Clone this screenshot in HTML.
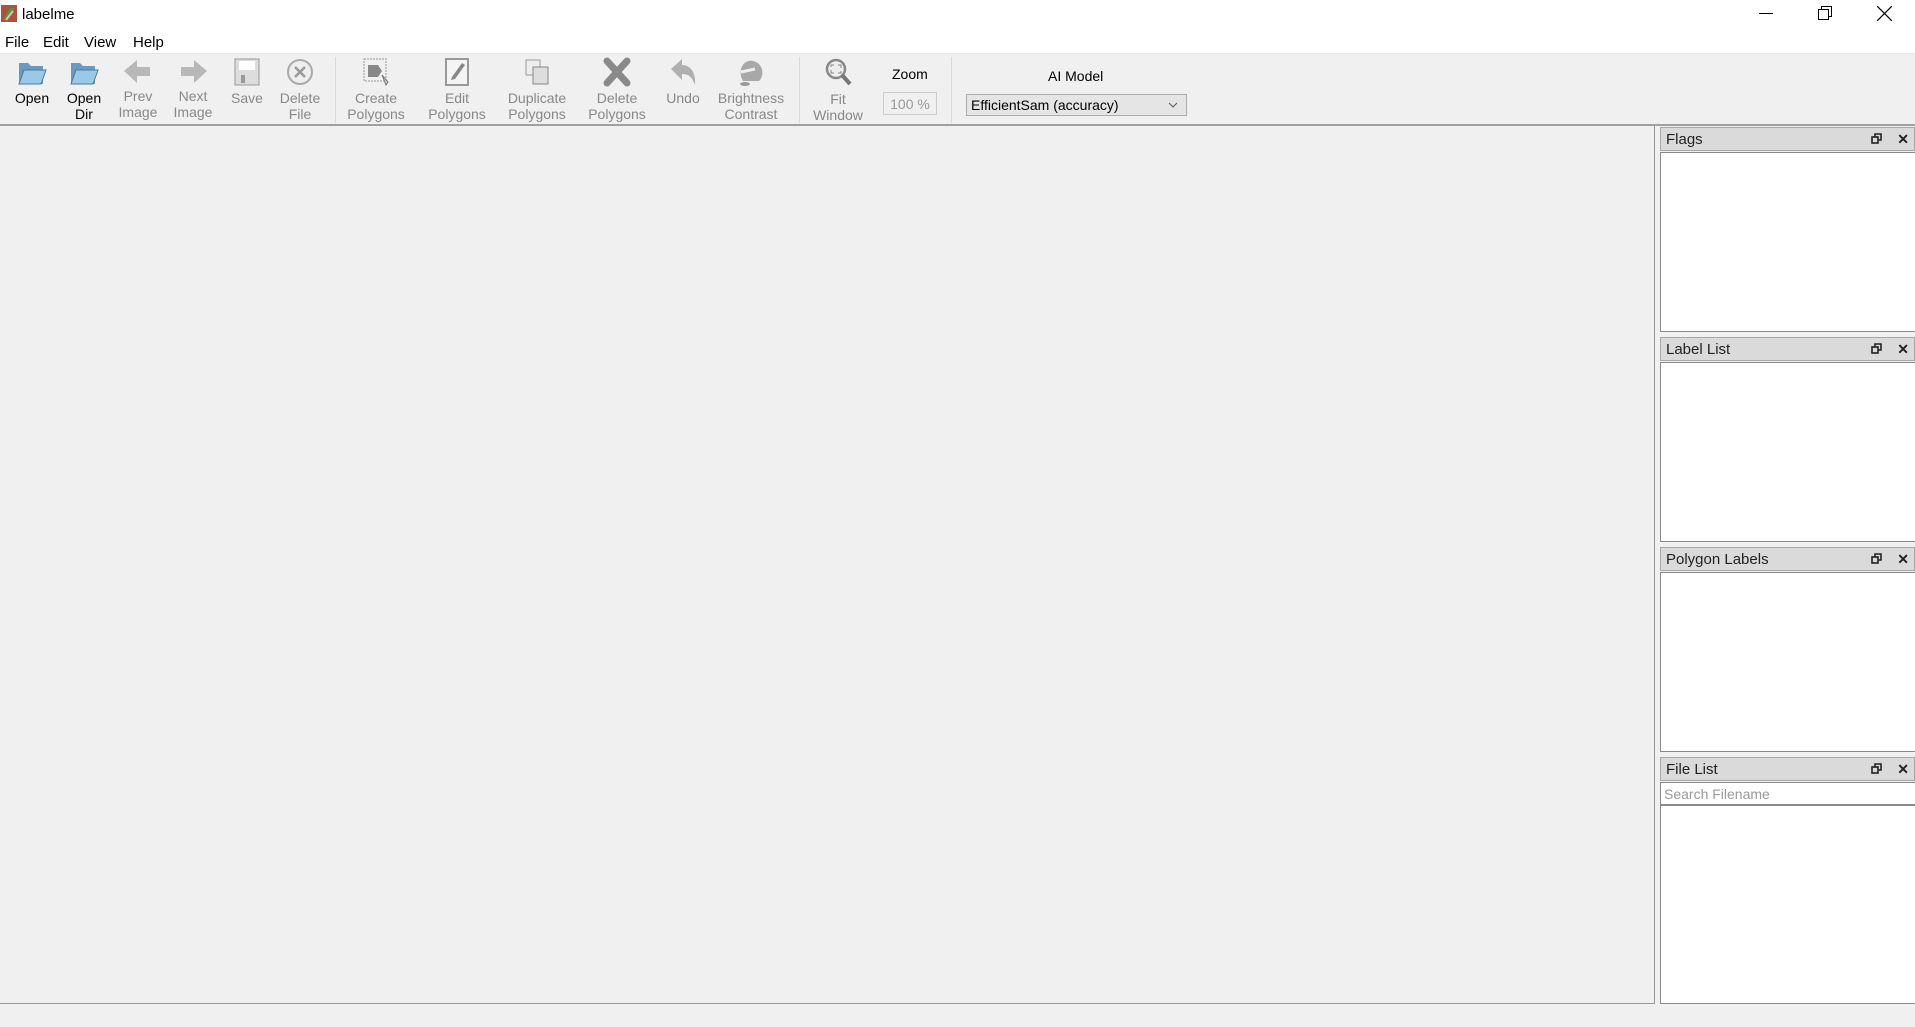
<!DOCTYPE html>
<html><head><meta charset="utf-8"><style>
*{margin:0;padding:0;box-sizing:border-box}
body{width:1915px;height:1027px;background:#f0f0f0;font-family:"Liberation Sans","Noto Sans CJK KR",sans-serif;position:relative;overflow:hidden;color:#000}
.abs{position:absolute}
.tb{position:absolute;top:0;width:80px;text-align:center;font-size:14px;color:#888;line-height:17px}
.tb.en{color:#000}
.tb svg{position:absolute;top:57px;left:24px}
.tb .l{position:absolute;left:0;width:100%}
.sep{position:absolute;top:57px;width:1px;height:66px;background:#d8d8d8}
.dt{position:absolute;left:1660px;width:255px;height:24px;background:#dadada;border:1px solid #a8a8a8;font-size:15px;padding:3px 0 0 5px;color:#222}
.dt .b{position:absolute;right:5px;top:3px;font-size:14px;font-weight:bold}
.dt .f{position:absolute;right:32px;top:5px;width:11px;height:11px}
.box{position:absolute;left:1660px;width:255px;background:#fff;border:1px solid #888;border-right:none}
</style></head><body>
<div class="abs" style="left:0;top:0;width:1915px;height:53px;background:#fff"></div>
<svg class="abs" style="left:1px;top:5px" width="16" height="17"><rect width="16" height="17" fill="#b05040"/><path d="M2 16 L8 4 L14 2 L10 10 Z" fill="#4a9a3a"/><path d="M5 15 L12 6" stroke="#e0c0a0" stroke-width="2"/></svg>
<div class="abs" style="left:22px;top:6px;font-size:15px">labelme</div>
<div class="abs" style="left:1759px;top:13px;width:14px;height:1px;background:#000"></div>
<svg class="abs" style="left:1818px;top:6px" width="14" height="14"><rect x="0.5" y="3.5" width="10" height="10" fill="none" stroke="#000"/><path d="M3.5 3.5V0.5H13.5V10.5H10.5" fill="none" stroke="#000"/></svg>
<svg class="abs" style="left:1877px;top:6px" width="15" height="15"><path d="M0 0L15 15M15 0L0 15" stroke="#000" stroke-width="1.2"/></svg>
<div class="abs" style="top:34px;left:5px;font-size:15px">File</div>
<div class="abs" style="top:34px;left:43px;font-size:15px">Edit</div>
<div class="abs" style="top:34px;left:84px;font-size:15px">View</div>
<div class="abs" style="top:34px;left:133px;font-size:15px">Help</div>
<div class="abs" style="left:0;top:53px;width:1915px;height:1px;background:#e4e4e4"></div>

<div class="tb en" style="left:-8px"><svg width="32" height="30"><path d="M3 6h9l3 3h12v18H3z" fill="#6a9ac0"/><path d="M3 27l5-14h22l-5 14z" fill="#9cc8e8" stroke="#4a7aa0"/></svg><div class="l" style="top:90px">Open</div></div>
<div class="tb en" style="left:44px"><svg width="32" height="30"><path d="M3 6h9l3 3h12v18H3z" fill="#6a9ac0"/><path d="M3 27l5-14h22l-5 14z" fill="#9cc8e8" stroke="#4a7aa0"/></svg><div class="l" style="top:90px">Open</div><div class="l" style="top:106px">Dir</div></div>
<div class="tb" style="left:98px"><svg width="32" height="30"><path d="M2 14L15 3v7h13v9H15v7z" fill="#b8b8b8"/></svg><div class="l" style="top:88px">Prev</div><div class="l" style="top:104px">Image</div></div>
<div class="tb" style="left:153px"><svg width="32" height="30"><path d="M30 14L17 3v7H4v9h13v7z" fill="#b8b8b8"/></svg><div class="l" style="top:88px">Next</div><div class="l" style="top:104px">Image</div></div>
<div class="tb" style="left:207px"><svg width="32" height="30"><rect x="4" y="2" width="24" height="26" fill="#ddd" stroke="#999"/><rect x="8" y="4" width="16" height="9" fill="#fff"/><rect x="10" y="18" width="4" height="8" fill="#999"/></svg><div class="l" style="top:90px">Save</div></div>
<div class="tb" style="left:260px"><svg width="32" height="30"><circle cx="16" cy="15" r="12" fill="#eee" stroke="#aaa" stroke-width="2"/><path d="M11 10l10 10M21 10l-10 10" stroke="#999" stroke-width="2.5"/></svg><div class="l" style="top:90px">Delete</div><div class="l" style="top:106px">File</div></div>
<div class="sep" style="left:335px"></div>
<div class="tb" style="left:336px"><svg width="32" height="30"><rect x="4" y="2" width="22" height="22" fill="none" stroke="#999" stroke-dasharray="2 1"/><path d="M8 8h10l4 6-4 6H8z" fill="#888"/><path d="M22 18l4 10 2-3z" fill="#ccc" stroke="#777"/></svg><div class="l" style="top:90px">Create</div><div class="l" style="top:106px">Polygons</div></div>
<div class="tb" style="left:417px"><svg width="32" height="30"><rect x="5" y="2" width="22" height="26" fill="#f4f4f4" stroke="#999" stroke-width="2"/><path d="M11 20l10-14 3 2-10 14-4 1z" fill="#888"/></svg><div class="l" style="top:90px">Edit</div><div class="l" style="top:106px">Polygons</div></div>
<div class="tb" style="left:497px"><svg width="32" height="30"><rect x="5" y="3" width="14" height="15" fill="#eee" stroke="#999"/><rect x="12" y="10" width="15" height="17" fill="#ddd" stroke="#888"/></svg><div class="l" style="top:90px">Duplicate</div><div class="l" style="top:106px">Polygons</div></div>
<div class="tb" style="left:577px"><svg width="32" height="30"><path d="M6 4l20 22M26 4L6 26" stroke="#8a8a8a" stroke-width="7" stroke-linecap="round"/></svg><div class="l" style="top:90px">Delete</div><div class="l" style="top:106px">Polygons</div></div>
<div class="tb" style="left:643px"><svg width="32" height="30"><path d="M4 12L15 2v6c9 0 14 8 13 20-3-8-6-11-13-11v6z" fill="#b0b0b0"/></svg><div class="l" style="top:90px">Undo</div></div>
<div class="tb" style="left:711px"><svg width="32" height="30"><path d="M8 24c-6-10 0-22 10-20s12 14 6 20z" fill="#a8a8a8"/><path d="M6 15l14-3" stroke="#eee" stroke-width="3"/><ellipse cx="10" cy="27" rx="5" ry="2" fill="#999"/></svg><div class="l" style="top:90px">Brightness</div><div class="l" style="top:106px">Contrast</div></div>
<div class="sep" style="left:799px"></div>
<div class="tb" style="left:798px"><svg width="32" height="30"><circle cx="14" cy="12" r="9" fill="#eee" stroke="#888" stroke-width="2.5"/><path d="M20 18l8 9" stroke="#777" stroke-width="4"/><path d="M9 10V8h3M16 8h3v3M19 14v2h-3M12 16H9v-3" stroke="#888" fill="none"/></svg><div class="l" style="top:91px">Fit</div><div class="l" style="top:107px">Window</div></div>
<div class="abs" style="left:892px;top:66px;font-size:14px">Zoom</div>
<div class="abs" style="left:883px;top:92px;width:54px;height:23px;border:1px solid #ccc;font-size:14px;color:#999;text-align:center;padding-top:3px">100 %</div>
<div class="sep" style="left:951px"></div>
<div class="abs" style="left:1048px;top:68px;font-size:14px">AI Model</div>
<div class="abs" style="left:966px;top:94px;width:221px;height:22px;border:1px solid #adadad;background:#e5e5e5;font-size:14px;padding:2px 0 0 4px">EfficientSam (accuracy)<svg class="abs" style="right:8px;top:7px" width="10" height="6"><path d="M1 1l4 4 4-4" stroke="#555" fill="none"/></svg></div>
<div class="abs" style="left:0;top:124px;width:1915px;height:2px;background:#a0a0a0"></div>

<div class="abs" style="left:0;top:126px;width:1655px;height:878px;border-right:1px solid #999;border-bottom:1px solid #999;background:#f0f0f0"></div>

<div class="dt" style="top:127px">Flags<svg class="f" viewBox="0 0 11 11"><rect x="1" y="4" width="6" height="6" fill="none" stroke="#222" stroke-width="1.6"/><path d="M4 4V1h6v6H7" fill="none" stroke="#222" stroke-width="1.6"/></svg><span class="b">✕</span></div>
<div class="box" style="top:152px;height:180px"></div>
<div class="dt" style="top:337px">Label List<svg class="f" viewBox="0 0 11 11"><rect x="1" y="4" width="6" height="6" fill="none" stroke="#222" stroke-width="1.6"/><path d="M4 4V1h6v6H7" fill="none" stroke="#222" stroke-width="1.6"/></svg><span class="b">✕</span></div>
<div class="box" style="top:362px;height:180px"></div>
<div class="dt" style="top:547px">Polygon Labels<svg class="f" viewBox="0 0 11 11"><rect x="1" y="4" width="6" height="6" fill="none" stroke="#222" stroke-width="1.6"/><path d="M4 4V1h6v6H7" fill="none" stroke="#222" stroke-width="1.6"/></svg><span class="b">✕</span></div>
<div class="box" style="top:572px;height:180px"></div>
<div class="dt" style="top:757px">File List<svg class="f" viewBox="0 0 11 11"><rect x="1" y="4" width="6" height="6" fill="none" stroke="#222" stroke-width="1.6"/><path d="M4 4V1h6v6H7" fill="none" stroke="#222" stroke-width="1.6"/></svg><span class="b">✕</span></div>
<div class="box" style="top:782px;height:24px;font-size:14px;color:#999;padding:3px 0 0 3px;border-bottom:2px solid #888">Search Filename</div>
<div class="box" style="top:806px;height:198px;border-top:none"></div>
</body></html>
